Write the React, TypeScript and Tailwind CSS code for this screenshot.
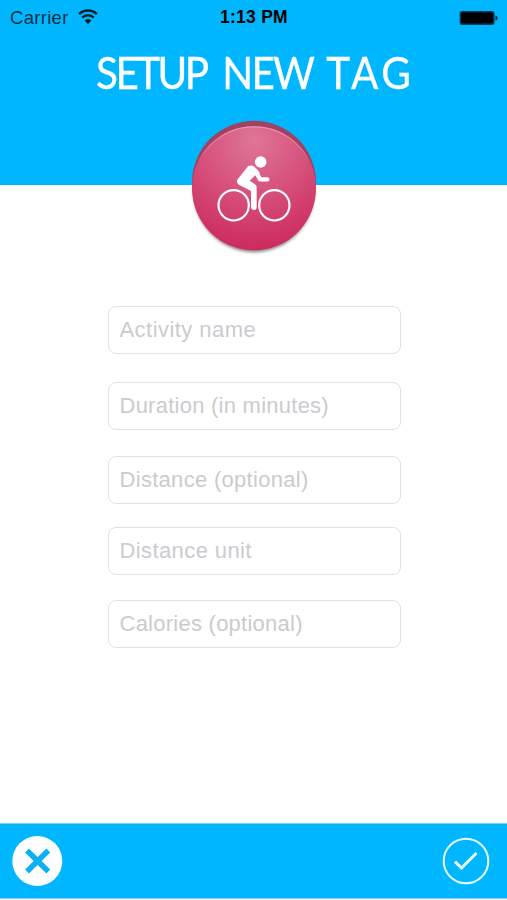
import { useState } from "react";

interface Field {
  name: string;
  placeholder: string;
  spacing: string;
}

const fields: Field[] = [
  { name: "activity", placeholder: "Activity name", spacing: "tracking-[0.45px]" },
  { name: "duration", placeholder: "Duration (in minutes)", spacing: "mt-7 tracking-[0.25px]" },
  { name: "distance", placeholder: "Distance (optional)", spacing: "mt-[26px] tracking-[0.3px]" },
  { name: "unit", placeholder: "Distance unit", spacing: "mt-[23px] tracking-[0.4px]" },
  { name: "calories", placeholder: "Calories (optional)", spacing: "mt-[25px] tracking-[0.25px]" },
];

function StatusBar() {
  return (
    <div className="grid h-9 grid-cols-3 items-center pl-[10px] pr-[9px] text-black">
      <div className="flex items-center gap-[9px]">
        <span className="text-[18.5px] leading-none tracking-[0.3px] text-[#06303f]">Carrier</span>
        <svg className="-mt-[3px]" width="20" height="15" viewBox="0 0 20 15" fill="none" stroke="#03202b" strokeWidth="2.5">
          <path d="M1 5.2C6 .2 14 .2 19 5.2" />
          <path d="M4.2 8.7C7.4 5.5 12.6 5.5 15.8 8.7" />
          <path d="M6.6 11.6C8.6 9.6 11.4 9.6 13.4 11.6L10 14.9Z" fill="#03202b" stroke="none" />
        </svg>
      </div>
      <span className="text-center text-[17.5px] font-bold leading-none tracking-[0.25px]">1:13 PM</span>
      <svg className="-mt-px justify-self-end" width="39" height="16" viewBox="0 0 39 16">
        <rect x="0.6" y="1" width="35" height="14" rx="2.5" fill="#003f5b" />
        <rect x="2" y="2.4" width="32.2" height="11.2" rx="1" fill="#000" />
        <path d="M36.5 5.4Q38.7 6 38.7 8T36.5 10.6Z" fill="#00202e" />
      </svg>
    </div>
  );
}

function CyclingBadge() {
  return (
    <svg className="block" width="150" height="150" viewBox="0 0 450 450">
      <defs>
        <radialGradient id="face" cx="0.5" cy="0.12" r="0.9">
          <stop offset="0" stopColor="#de7698" />
          <stop offset="0.5" stopColor="#d64f7a" />
          <stop offset="1" stopColor="#cb295c" />
        </radialGradient>
        <linearGradient id="shine" x1="0" y1="0" x2="0" y2="1">
          <stop offset="0" stopColor="#ea94af" />
          <stop offset="0.3" stopColor="#ea94af" stopOpacity="0" />
        </linearGradient>
        <filter id="soft" x="-10%" y="-10%" width="120%" height="120%">
          <feGaussianBlur stdDeviation="4" />
        </filter>
      </defs>
      <ellipse cx="222" cy="241" rx="182" ry="186" fill="#453039" opacity="0.6" filter="url(#soft)" />
      <circle cx="222" cy="218" r="186" fill="#a04262" />
      <circle cx="222" cy="235" r="186" fill="url(#face)" />
      <circle cx="222" cy="235" r="184.5" fill="none" stroke="url(#shine)" strokeWidth="4" />
      <g fill="none" stroke="#fff">
        <circle cx="161" cy="286" r="45.5" strokeWidth="6.5" />
        <circle cx="283" cy="286" r="45.5" strokeWidth="6.5" />
        <path d="M227 183L240 208H262" strokeWidth="13" strokeLinecap="round" strokeLinejoin="round" />
      </g>
      <g fill="#fff">
        <circle cx="242" cy="156" r="17.5" />
        <path d="M204 169Q214 163 223 170L238 186Q240 192 233 199L226 196L209 212L225 223Q230 226 230 232V291Q230 300 222 300T213 291V243L178 225Q168 219 172 209Z" />
      </g>
    </svg>
  );
}

export default function App() {
  const [values, setValues] = useState<Record<string, string>>({});

  return (
    <div className="flex h-[900px] w-[507px] flex-col overflow-hidden bg-white font-['Liberation_Sans',Arial,sans-serif]">
      <header className="h-[185px] shrink-0 bg-[#00b7ff]">
        <StatusBar />
        <h1 className="mt-[9px] flex h-[54px] scale-x-[0.92] items-center justify-center pl-[4px] font-['Lato',sans-serif] text-[44px] font-normal leading-none text-white [-webkit-text-stroke:0.3px_white]">
          <span className="mr-[17px] tracking-[-2.8px]">SETUP</span>
          <span className="mr-[14px] tracking-[-1.8px]">NEW</span>
          <span className="tracking-[4px]">TAG</span>
        </h1>
        <div className="mt-[11px] flex justify-center pl-[3px]">
          <CyclingBadge />
        </div>
      </header>

      <main className="flex flex-1 flex-col items-center pl-[2px] pt-[121px]">
        {fields.map((field) => (
          <input
            key={field.name}
            type="text"
            aria-label={field.placeholder}
            placeholder={field.placeholder}
            value={values[field.name] || ""}
            onChange={(e) => setValues({ ...values, [field.name]: e.target.value })}
            className={`h-12 w-[293px] shrink-0 rounded-lg border-[1.5px] border-[#e1e1e3] bg-white px-[10.5px] text-[22px] text-gray-800 outline-none placeholder:text-[#cbcbcf] ${field.spacing}`}
          />
        ))}
      </main>

      <footer className="mb-px flex h-[76px] shrink-0 items-center justify-between border-y border-[#6fd7ff] bg-[#00b7ff] pl-3 pr-[17px]">
        <button type="button" aria-label="Cancel">
          <svg className="block" width="51" height="51" viewBox="0 0 51 51">
            <circle cx="25.3" cy="25" r="25" fill="#fff" />
            <path d="M15 14.5L36.3 35.5M36.3 14.5L15 35.5" stroke="#0cb0f3" strokeWidth="5.5" />
          </svg>
        </button>
        <button type="button" aria-label="Save">
          <svg className="block" width="48" height="48" viewBox="0 0 48 48" fill="none" stroke="#e6ffff">
            <circle cx="24" cy="24" r="22.3" strokeWidth="2" />
            <path d="M13 24.7L19.5 31L34.5 16" strokeWidth="3" />
          </svg>
        </button>
      </footer>
    </div>
  );
}
